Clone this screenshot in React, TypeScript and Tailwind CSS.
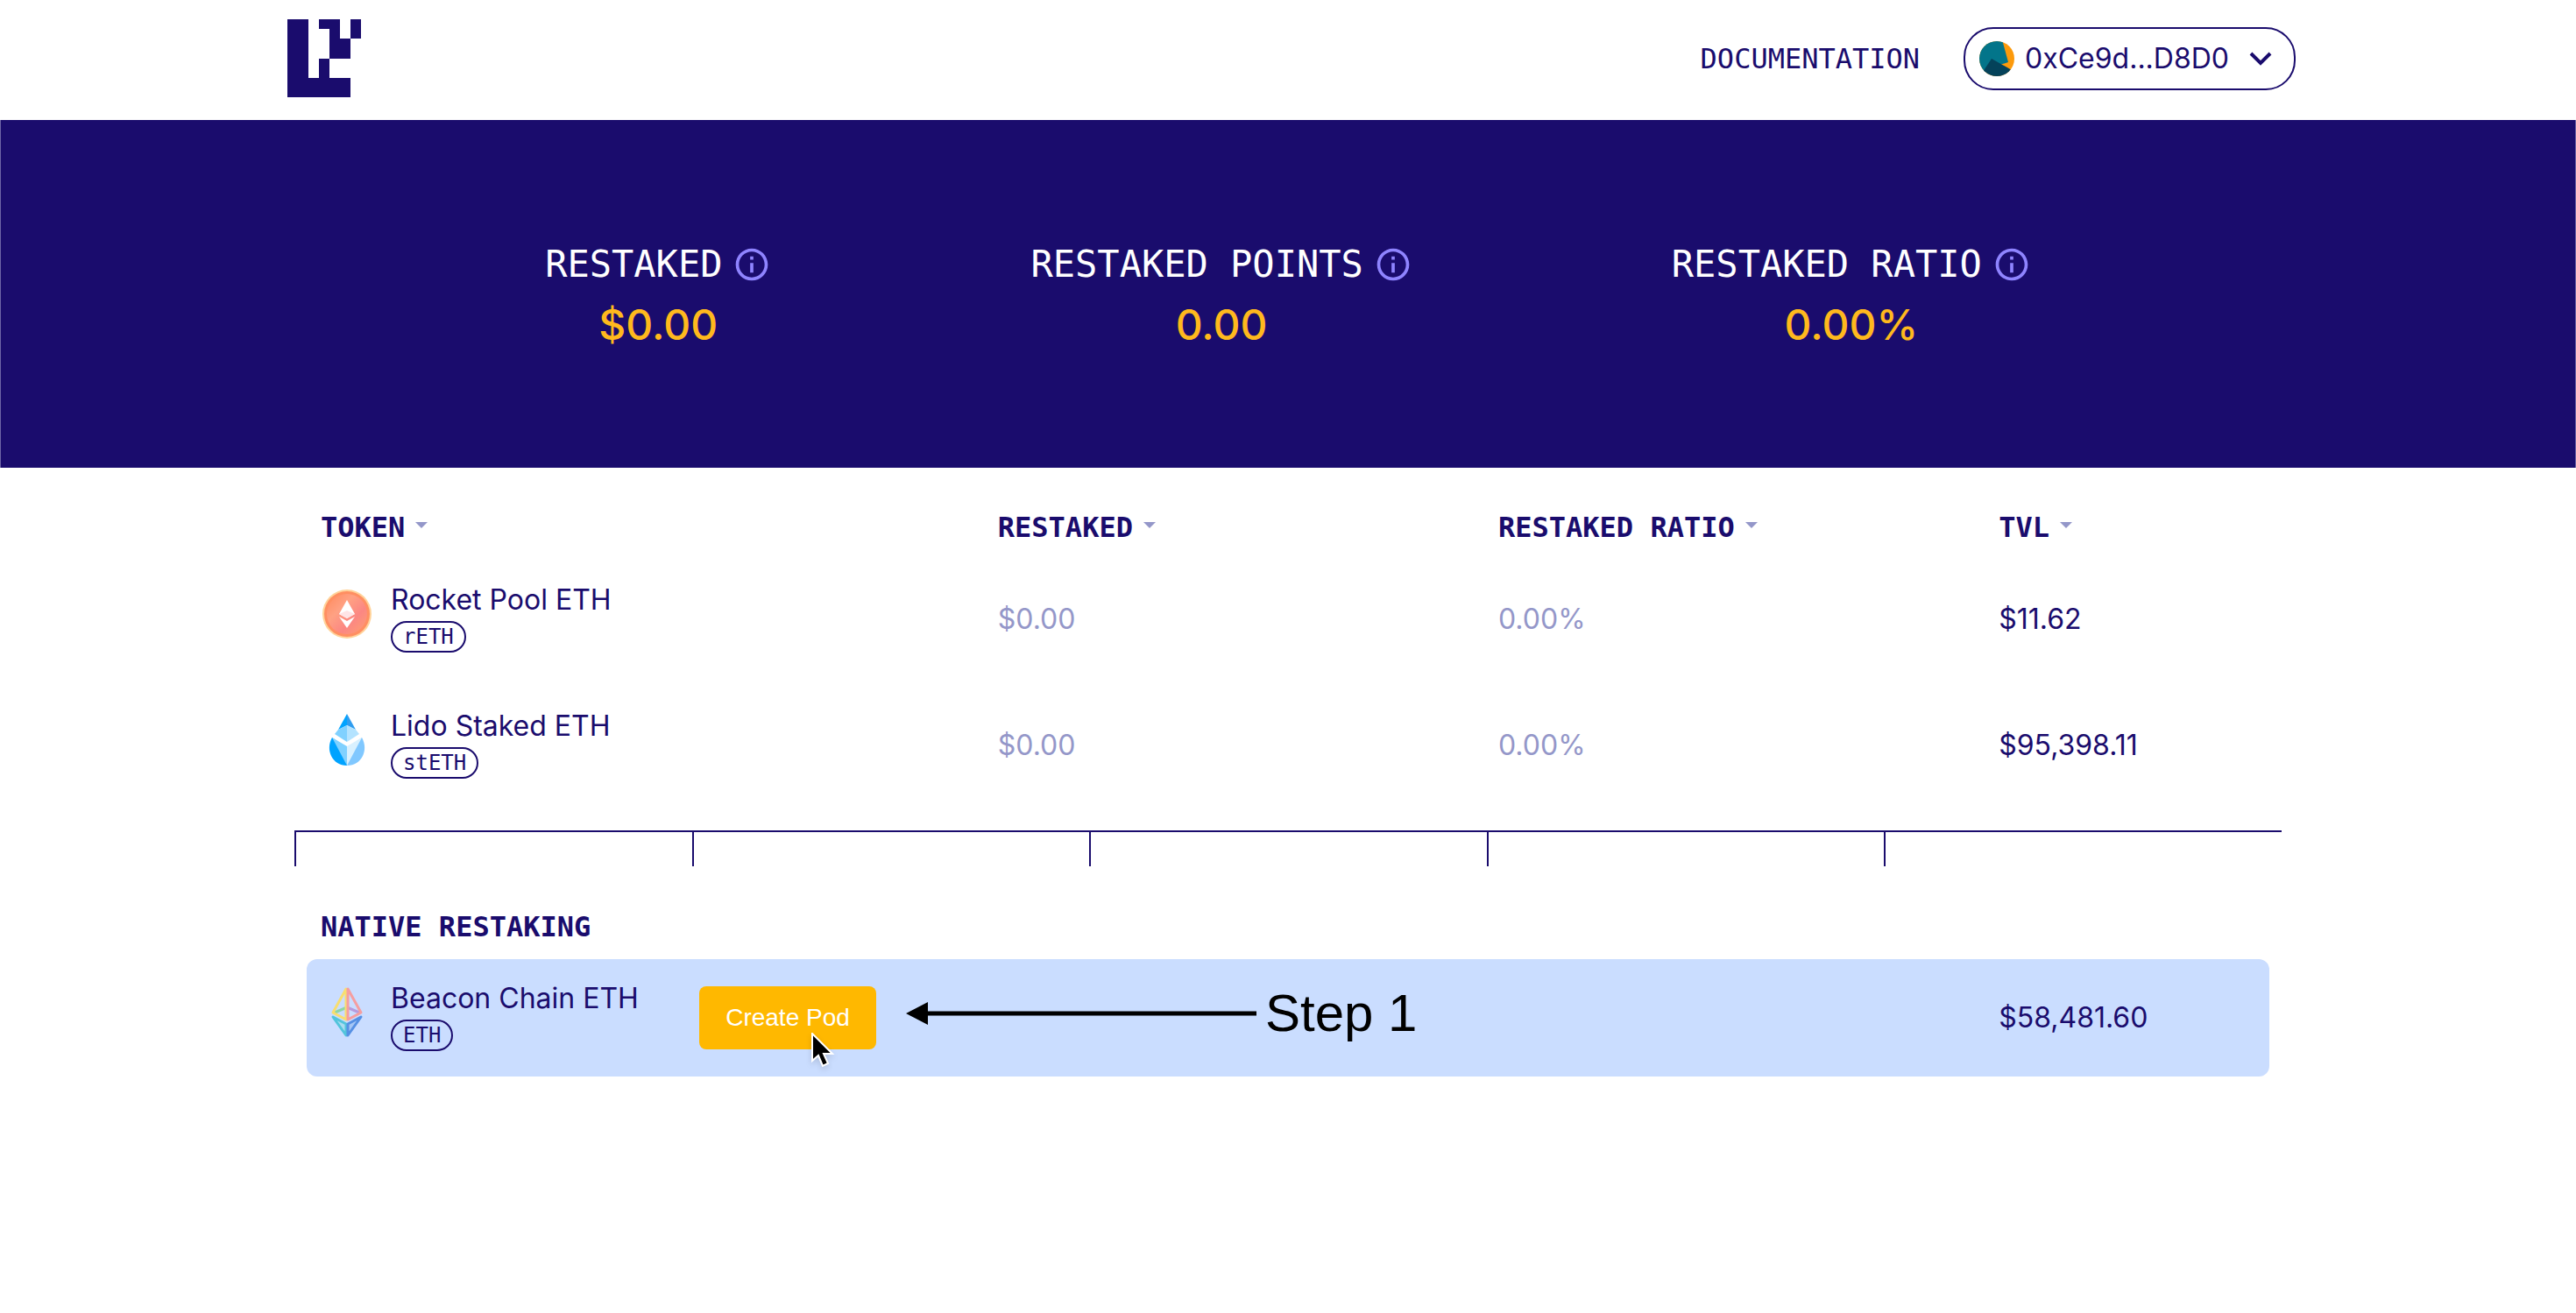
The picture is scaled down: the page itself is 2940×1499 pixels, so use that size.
import type { ReactNode } from "react";

const mono = "font-['DejaVu_Sans_Mono',monospace]";

function Logo() {
  return (
    <svg viewBox="0 0 84 89" className="h-[89px] w-[84px]" fill="#1a0c6d" aria-label="EigenLayer" role="img">
      <path d="M0 0h24v67h12V45h12V11H36V0h24v22h12v23H48v22h24v22H0z" />
      <path d="M72 0h12v22H72z" />
    </svg>
  );
}

function Avatar() {
  return (
    <svg viewBox="0 0 40 40" className="size-10 rounded-full" aria-hidden="true">
      <rect width="40" height="40" fill="#fc9a0c" />
      <path d="M-2-2H26L33 24L14 30L4 36L-2 34z" fill="#03758a" />
      <path d="M14 20L37 33L30 44H0L6 32z" fill="#04425a" />
    </svg>
  );
}

function InfoIcon() {
  return (
    <svg viewBox="0 0 24 24" className="size-11" fill="#8f84ff" aria-hidden="true">
      <path d="M11 7h2v2h-2zm0 4h2v6h-2zm1-9C6.480 2 2 6.480 2 12s4.480 10 10 10 10-4.480 10-10S17.520 2 12 2zm0 18c-4.410 0-8-3.590-8-8s3.590-8 8-8 8 3.590 8 8-3.590 8-8 8z" />
    </svg>
  );
}

function RocketIcon() {
  return (
    <svg viewBox="0 0 56 56" className="size-14" aria-hidden="true">
      <defs>
        <linearGradient id="rp" x1="0" y1="0" x2="1" y2="1">
          <stop offset="0" stopColor="#ff8a5c" />
          <stop offset="0.35" stopColor="#ffa183" />
          <stop offset="0.65" stopColor="#fb8783" />
          <stop offset="1" stopColor="#ffa070" />
        </linearGradient>
      </defs>
      <circle cx="28" cy="28" r="28" fill="#ffd39a" />
      <circle cx="28" cy="28" r="26" fill="#ff8f62" />
      <circle cx="28" cy="28" r="23" fill="url(#rp)" />
      <path d="M28 12L37 28L28 33L19 28z" fill="#fff" />
      <path d="M28 36L37 31L28 44L19 31z" fill="#fff" />
      <path d="M28 24L37 28L28 33L19 28z" fill="#ffe4e6" />
    </svg>
  );
}

function LidoIcon() {
  return (
    <svg viewBox="0 0 56 60" className="h-[60px] w-14" aria-hidden="true">
      <path d="M28 0L18 18L28 13z" fill="#00a3ff" />
      <path d="M28 0L38 18L28 13z" fill="#2f9df0" />
      <path d="M28 13L18 18L14 23L28 32z" fill="#80d1ff" />
      <path d="M28 13L38 18L42 23L28 32z" fill="#b3e3ff" />
      <path d="M11 27C3 41 11 59 28 59V39z" fill="#00a3ff" />
      <path d="M11 27L28 59V37z" fill="#80d1ff" />
      <path d="M45 27C53 41 45 59 28 59V39z" fill="#80c8ff" />
      <path d="M45 27L28 59V37z" fill="#d9f1ff" />
    </svg>
  );
}

function EthIcon() {
  return (
    <svg viewBox="0 0 56 60" className="h-[60px] w-14" fill="none" strokeWidth="3" strokeLinejoin="round" aria-hidden="true">
      <path d="M14 30L28 24" stroke="#8fd6a4" />
      <path d="M42 30L28 24" stroke="#b79bdc" />
      <path d="M27 3V38L12 30z" stroke="#f8de70" />
      <path d="M29 3V38L44 30z" stroke="#f59ea0" />
      <path d="M12 35L27 43V56z" stroke="#52c4dc" fill="#a9dcf0" />
      <path d="M44 35L29 43V56z" stroke="#5590e4" fill="#a4c6f5" />
    </svg>
  );
}

const stats = [
  { label: "RESTAKED", value: "$0.00" },
  { label: "RESTAKED POINTS", value: "0.00" },
  { label: "RESTAKED RATIO", value: "0.00%" },
];

const columns = ["TOKEN", "RESTAKED", "RESTAKED RATIO", "TVL"];

const tokens = [
  { name: "Rocket Pool ETH", symbol: "rETH", icon: <RocketIcon />, tvl: "$11.62" },
  { name: "Lido Staked ETH", symbol: "stETH", icon: <LidoIcon />, tvl: "$95,398.11" },
];

function Columns() {
  return (
    <colgroup>
      <col className="w-[34.5%]" />
      <col className="w-[25.5%]" />
      <col className="w-[25.5%]" />
      <col className="w-[14.5%]" />
    </colgroup>
  );
}

function Token({ name, symbol, icon }: { name: string; symbol: string; icon: ReactNode }) {
  return (
    <div className="flex items-center gap-5 pb-2">
      <div className="mb-1 flex size-15 items-center justify-center">{icon}</div>
      <div>
        <div className="leading-[48px] whitespace-nowrap">{name}</div>
        <span className={`block w-fit rounded-full border-2 border-[#1a0c6d] px-3 text-2xl leading-8 ${mono}`}>{symbol}</span>
      </div>
    </div>
  );
}

export default function App() {
  return (
    <div className="min-h-screen bg-white font-[Inter,sans-serif] text-[32px] text-[#1a0c6d]">
      <header className="flex h-[137px] items-center justify-between pr-80 pb-1 pl-[328px]">
        <Logo />
        <nav className="flex items-center gap-[50px]">
          <a href="#documentation" className={mono}>DOCUMENTATION</a>
          <button className="flex h-18 items-center rounded-[34px] border-2 border-[#1a0c6d] pr-6 pl-4">
            <Avatar />
            <span className="mr-[22px] ml-3">0xCe9d...D8D0</span>
            <svg viewBox="0 0 28 28" className="size-7" fill="none" stroke="#1a0c6d" strokeWidth="4" aria-hidden="true">
              <path d="M3 8L14 19L25 8" />
            </svg>
          </button>
        </nav>
      </header>

      <section className="flex h-[397px] items-center justify-center gap-[296px] border-x border-[#6d64a5] bg-[#1a0c6d] pt-1.5">
        {stats.map((s) => (
          <div key={s.label} className="text-center">
            <div className={`flex items-center gap-3 text-[42px] leading-[64px] text-white ${mono}`}>
              {s.label}
              <InfoIcon />
            </div>
            <div className="text-5xl leading-[74px] font-medium text-[#ffb91d]">{s.value}</div>
          </div>
        ))}
      </section>

      <main className="mx-auto w-full max-w-[2268px]">
        <div className="px-3.5">
          <table className="w-full table-fixed">
            <Columns />
            <thead>
              <tr className="h-[101px]">
                {columns.map((c) => (
                  <th key={c} className="px-4 pt-[35px] text-left align-top">
                    <button className={`flex items-center gap-3 leading-[66px] font-bold ${mono}`}>
                      {c}
                      <svg viewBox="0 0 14 7" className="mb-1.5 h-[7px] w-3.5" fill="#9497c9" aria-hidden="true">
                        <path d="M0 0h14L7 7z" />
                      </svg>
                    </button>
                  </th>
                ))}
              </tr>
            </thead>
            <tbody>
              {tokens.map((t) => (
                <tr key={t.symbol} className="h-36">
                  <td className="px-4"><Token name={t.name} symbol={t.symbol} icon={t.icon} /></td>
                  <td className="px-4 text-[#9497c9]">$0.00</td>
                  <td className="px-4 text-[#9497c9]">0.00%</td>
                  <td className="px-4">{t.tvl}</td>
                </tr>
              ))}
            </tbody>
          </table>
        </div>

        <div className="mt-[25px] grid h-[41px] grid-cols-5 border-t-2 border-[#1a0c6d]">
          {[0, 1, 2, 3, 4].map((i) => (
            <div key={i} className="border-l-2 border-[#1a0c6d]" />
          ))}
        </div>

        <div className="px-3.5">
          <h2 className={`px-4 pt-9 pb-1 leading-[66px] font-bold ${mono}`}>NATIVE RESTAKING</h2>
          <div className="relative rounded-xl bg-[#caddff]">
            <table className="w-full table-fixed">
              <Columns />
              <tbody>
                <tr className="h-[134px]">
                  <td className="px-4">
                    <div className="flex items-center">
                      <div className="w-[432px]">
                        <Token name="Beacon Chain ETH" symbol="ETH" icon={<EthIcon />} />
                      </div>
                      <button className="h-18 w-[202px] rounded-lg bg-[#ffb800] font-['Liberation_Sans',sans-serif] text-[28px] text-white">
                        Create Pod
                      </button>
                    </div>
                  </td>
                  <td />
                  <td />
                  <td className="px-4">$58,481.60</td>
                </tr>
              </tbody>
            </table>
            <div className="absolute top-5 left-[684px] flex items-center gap-2.5 font-['Liberation_Sans',sans-serif] text-[60px] leading-[84px] text-black">
              <svg viewBox="0 0 400 26" className="h-[26px] w-[400px]" aria-hidden="true">
                <path d="M0 13L25 0V10.500H400V15.500H25V26z" />
              </svg>
              Step 1
            </div>
            <svg viewBox="0 0 28 42" className="absolute top-[84px] left-[576px] h-[42px] w-7 drop-shadow-md" aria-hidden="true">
              <path d="M1 1V32L8 26L13 38L19 35L14 24H24z" fill="#000" stroke="#fff" strokeWidth="2" />
            </svg>
          </div>
        </div>
      </main>
    </div>
  );
}
